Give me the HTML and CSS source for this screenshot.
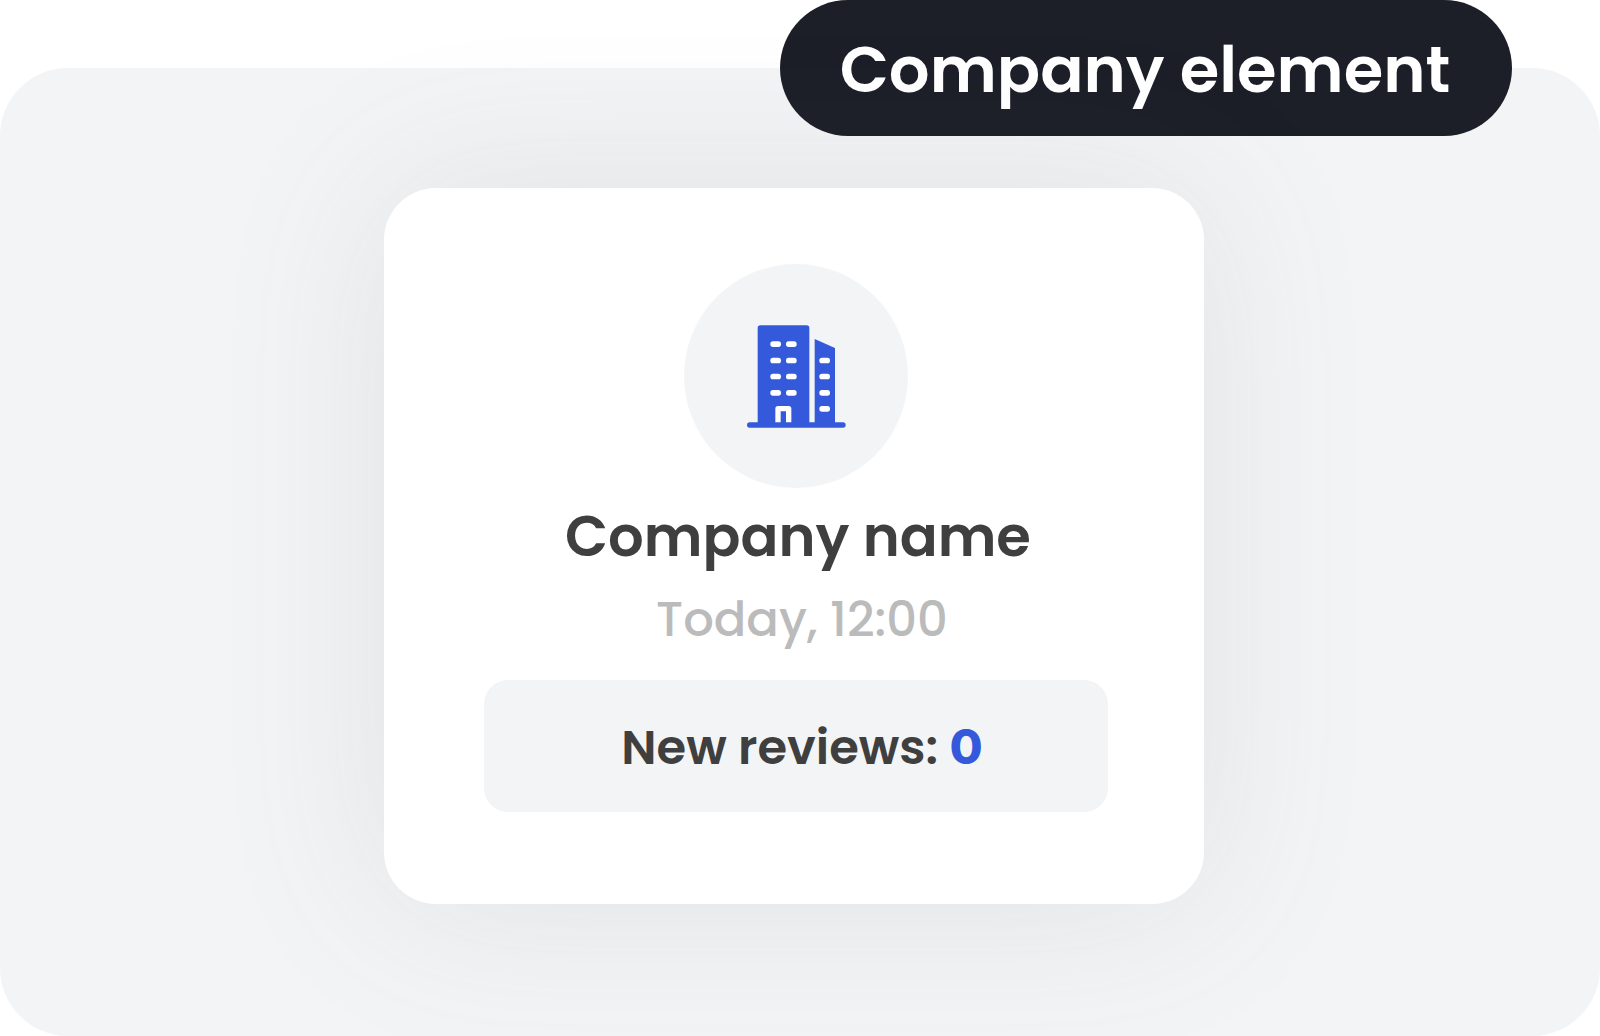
FILE: index.html
```html
<!DOCTYPE html>
<html lang="en">
<head>
<meta charset="utf-8">
<meta name="viewport" content="width=device-width, initial-scale=1">
<title>Company element</title>
<link rel="stylesheet" href="styles.css">
</head>
<body>
<main class="panel">
  <h1 class="tag">Company element</h1>
  <article class="card">
    <div class="avatar">
      <svg class="avatar-icon" viewBox="0 0 297 309" aria-hidden="true">
        <path fill="#345adb" d="M8 292H32V9Q32 1 40 1H179Q187 1 187 9V292H203V42L264 69V292H288A8 8 0 0 1 288 308H8A8 8 0 0 1 8 292Z"/>
        <g fill="#fff">
          <rect x="70" y="49" width="32" height="17" rx="8"/><rect x="117" y="49" width="32" height="17" rx="8"/>
          <rect x="70" y="98" width="32" height="17" rx="8"/><rect x="117" y="98" width="32" height="17" rx="8"/>
          <rect x="70" y="146" width="32" height="17" rx="8"/><rect x="117" y="146" width="32" height="17" rx="8"/>
          <rect x="70" y="195" width="32" height="17" rx="8"/><rect x="117" y="195" width="32" height="17" rx="8"/>
          <rect x="217" y="98" width="32" height="17" rx="8"/><rect x="217" y="146" width="32" height="17" rx="8"/>
          <rect x="217" y="195" width="32" height="17" rx="8"/><rect x="217" y="243" width="32" height="17" rx="8"/>
          <path d="M85 292V251Q85 243 93 243H125Q133 243 133 251V292H117V259H101V292Z"/>
        </g>
      </svg>
    </div>
    <h2 class="name">Company name</h2>
    <time class="date">Today, 12:00</time>
    <p class="reviews">New reviews: <strong class="count">0</strong></p>
  </article>
</main>
</body>
</html>
```
FILE: styles.css
```css
* {
  box-sizing: border-box;
}

body {
  margin: 0;
  padding-top: 68px;
  background: #fff;
  color: #3f3f3f;
  font-family: Poppins, Inter, sans-serif;
}

.panel {
  position: relative;
  display: flex;
  justify-content: center;
  padding: 120px 12px 132px 0;
  border-radius: 68px;
  background: #f3f4f6;
}

.tag {
  position: absolute;
  top: -68px;
  right: 88px;
  width: 732px;
  margin: 0;
  padding: 4px 2px 0 0;
  border-radius: 68px;
  background: #1c1e28;
  color: #fff;
  font-size: 64px;
  font-weight: 600;
  line-height: 132px;
  text-align: center;
  white-space: nowrap;
}

/* The card's shadow falls over the tag as well as the panel. */
.card {
  position: relative;
  display: flex;
  flex-direction: column;
  align-items: center;
  width: 820px;
  padding: 76px 96px 92px 100px;
  border-radius: 52px;
  background: #fff;
  box-shadow: 0 0 168px rgba(105, 108, 108, 0.13);
}

.avatar {
  display: flex;
  align-items: center;
  justify-content: center;
  width: 224px;
  height: 224px;
  border-radius: 50%;
  background: #f3f4f6;
}

.avatar-icon {
  width: 99px;
  height: 103px;
}

.name {
  margin: 8px 0;
  padding: 2px 0 0 4px;
  font-size: 56px;
  font-weight: 600;
  line-height: 78px;
}

.date {
  padding-left: 12px;
  color: #bbb;
  font-size: 48px;
  font-weight: 500;
  line-height: 72px;
}

.reviews {
  align-self: stretch;
  margin: 24px 0 0;
  padding: 4px 0 0 12px;
  border-radius: 24px;
  background: #f3f4f6;
  font-size: 48px;
  font-weight: 600;
  line-height: 128px;
  text-align: center;
}

.count {
  color: #345adb;
  font-family: Inter, sans-serif;
  font-weight: 800;
  line-height: 1;
}
```
